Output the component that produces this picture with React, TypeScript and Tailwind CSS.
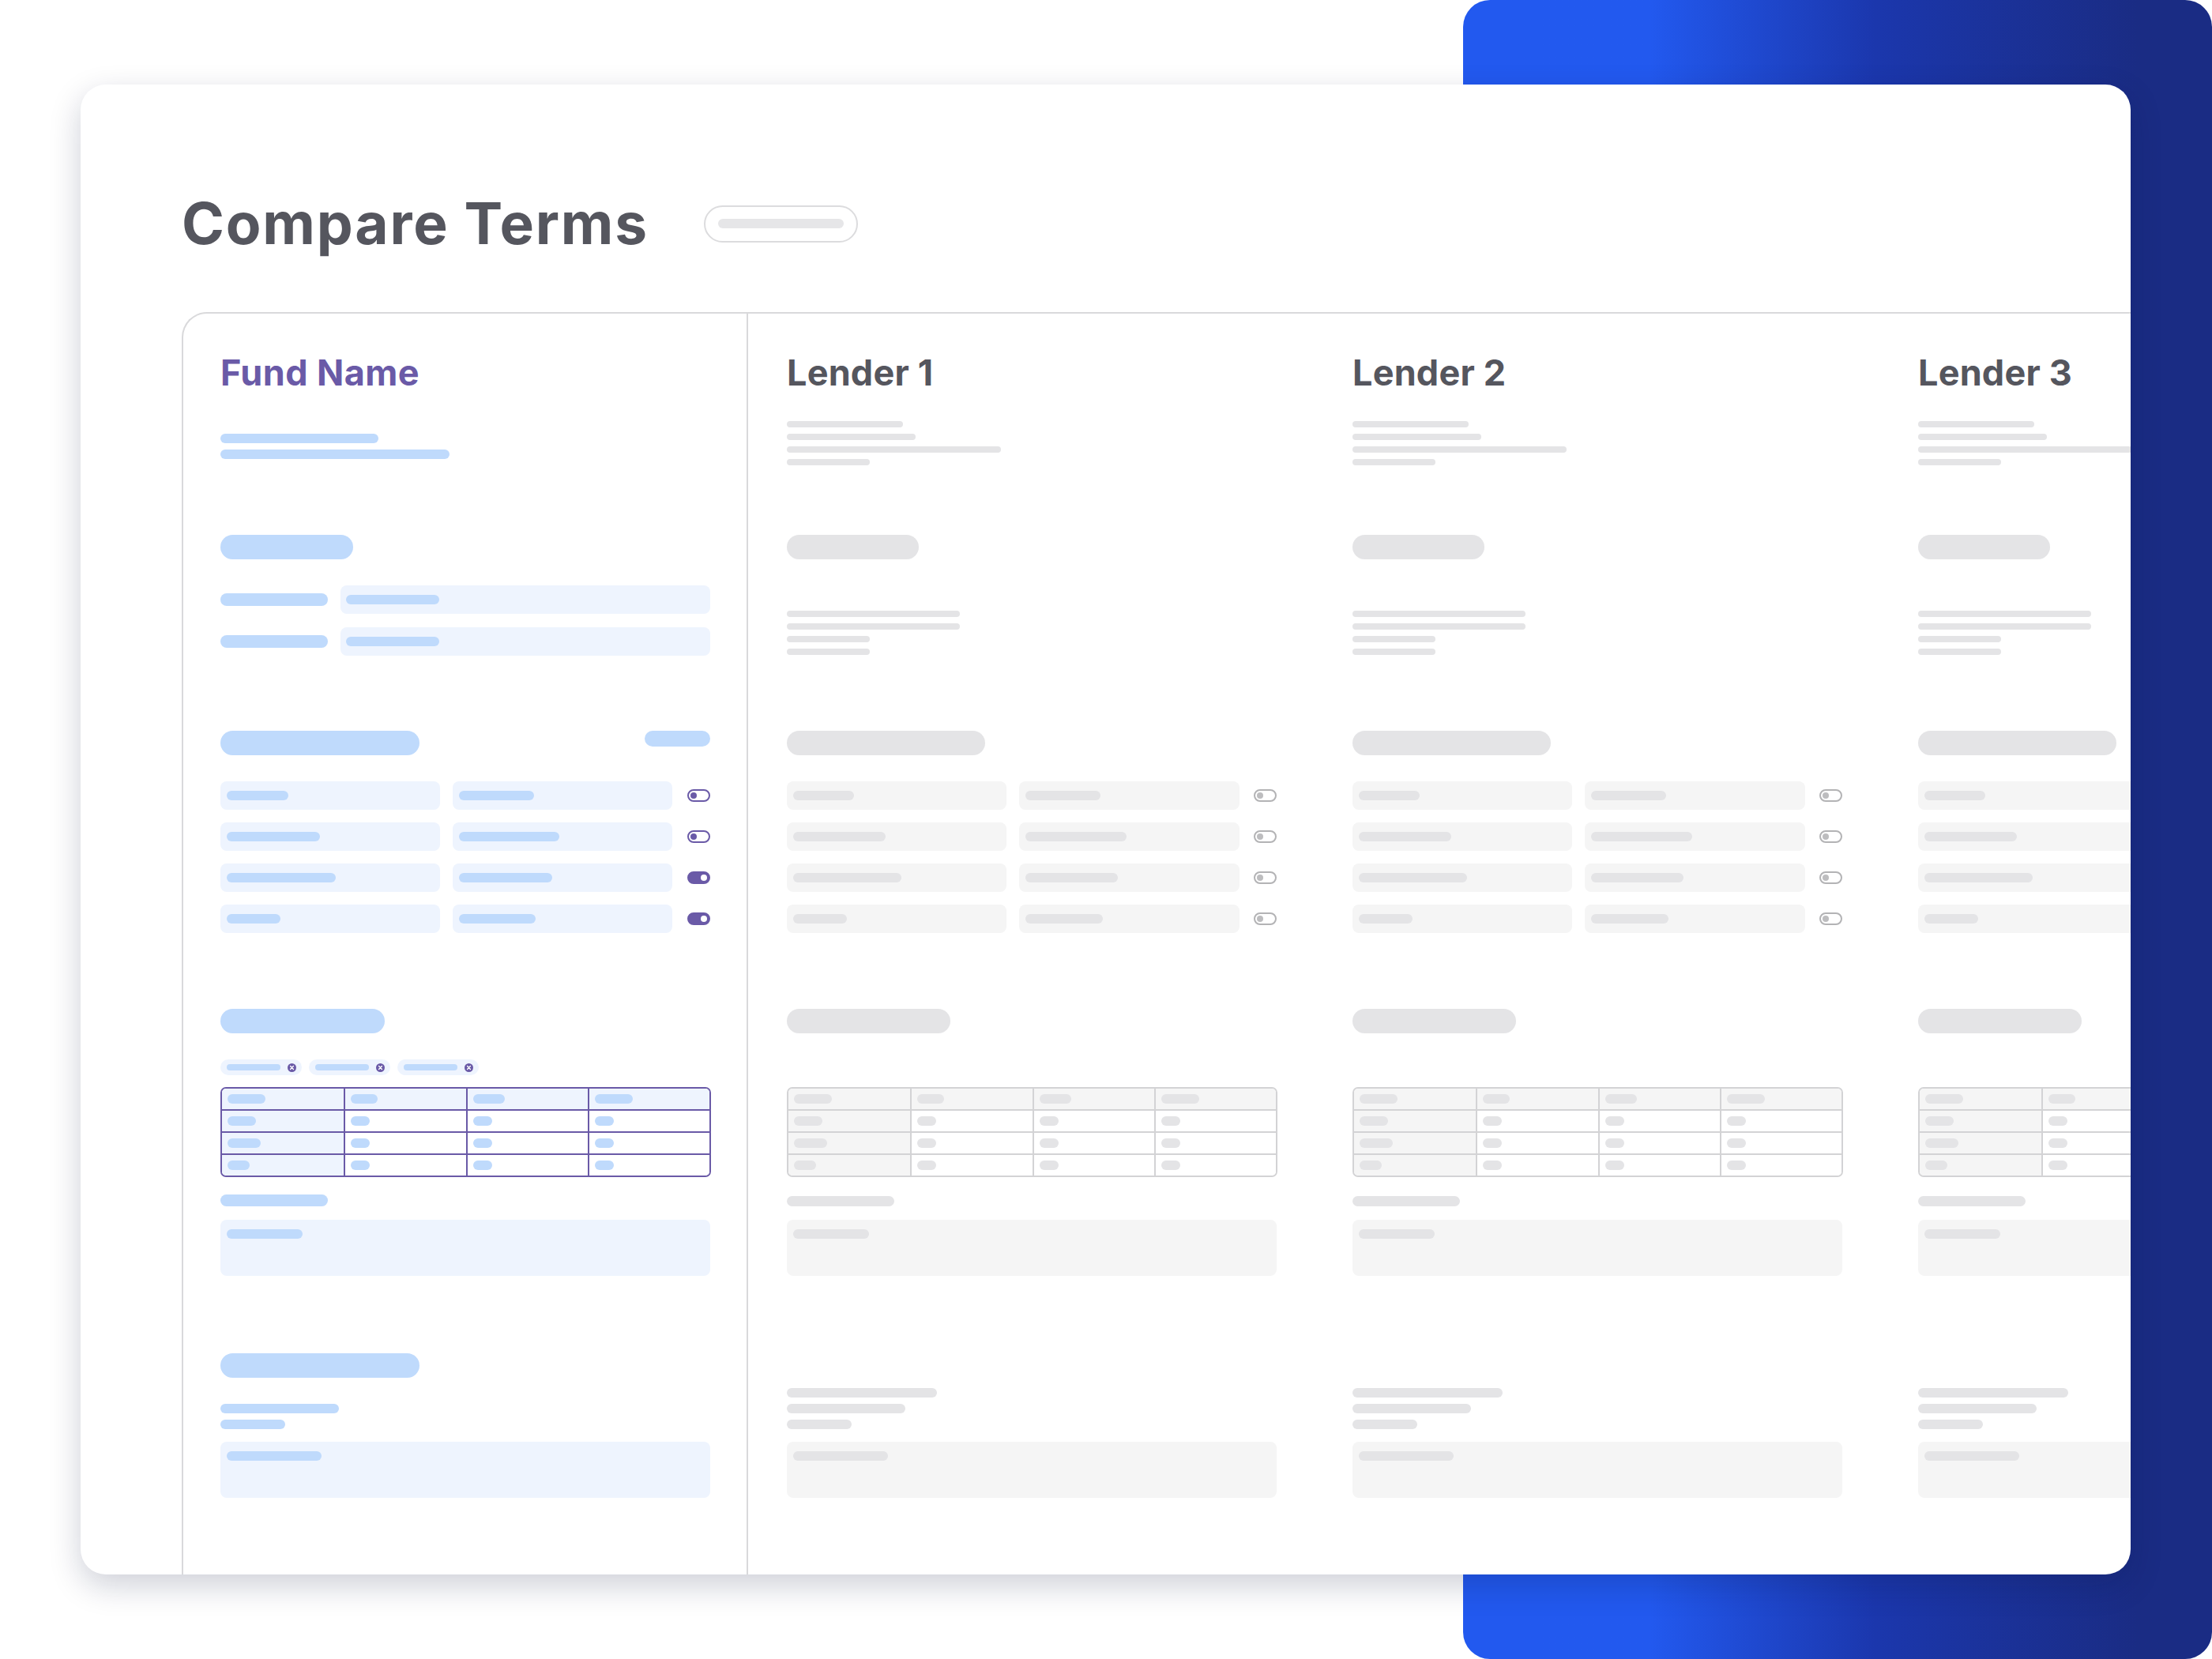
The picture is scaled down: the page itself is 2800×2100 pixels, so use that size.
import React from "react";

const FUND_ROWS = [
  { a: 78, b: 95, on: false },
  { a: 118, b: 127, on: false },
  { a: 138, b: 118, on: true },
  { a: 68, b: 97, on: true },
];

const LENDER_ROWS = [
  { a: 77, b: 95 },
  { a: 117, b: 128 },
  { a: 137, b: 117 },
  { a: 68, b: 98 },
];

const TABLE_HEAD = [48, 34, 40, 48];
const TABLE_FIRST = [36, 42, 28];

function Bar({ w, h = 12, color }: { w: number; h?: number; color: string }) {
  return <div className={`shrink-0 rounded-full ${color}`} style={{ width: w, height: h }} />;
}

function Toggle({ on, gray }: { on?: boolean; gray?: boolean }) {
  if (gray) {
    return (
      <div className="flex h-[16px] w-[29px] shrink-0 items-center rounded-full border-2 border-[#b3b3b5] px-[2px]">
        <div className="h-[8px] w-[8px] rounded-full bg-[#bdbdbf]" />
      </div>
    );
  }
  return on ? (
    <div className="flex h-[16px] w-[29px] shrink-0 items-center justify-end rounded-full border-2 border-[#6a5aa7] bg-[#6a5aa7] px-[2px]">
      <div className="h-[8px] w-[8px] rounded-full bg-white" />
    </div>
  ) : (
    <div className="flex h-[16px] w-[29px] shrink-0 items-center rounded-full border-2 border-[#6a5aa7] px-[2px]">
      <div className="h-[8px] w-[8px] rounded-full bg-[#6a5aa7]" />
    </div>
  );
}

function Chip() {
  return (
    <div className="flex h-[20px] w-[103px] items-center justify-between rounded-full bg-[#eef4fe] pl-[8px] pr-[7px]">
      <Bar w={68} h={8} color="bg-[#bfdafc]" />
      <svg width="11" height="11" viewBox="0 0 11 11">
        <circle cx="5.5" cy="5.5" r="5.5" fill="#6a5aa7" />
        <path d="M3.6 3.6 L7.4 7.4 M7.4 3.6 L3.6 7.4" stroke="#fff" strokeWidth="1.4" strokeLinecap="round" />
      </svg>
    </div>
  );
}

function MiniTable({ fund }: { fund?: boolean }) {
  const border = fund ? "border-[#6a5aa7]" : "border-[#d3d3d5]";
  const tint = fund ? "bg-[#eef4fe]" : "bg-[#f5f5f5]";
  const bar = fund ? "bg-[#bfdafc]" : "bg-[#e4e4e6]";
  return (
    <div className={`w-[621px] overflow-hidden rounded-[7px] border-2 ${border}`}>
      <div className={`grid h-[26px] grid-cols-4 ${tint}`}>
        {TABLE_HEAD.map((w, i) => (
          <div key={i} className={`flex items-center pl-[7px] ${i > 0 ? `border-l-2 ${border}` : ""}`}>
            <Bar w={w} color={bar} />
          </div>
        ))}
      </div>
      {TABLE_FIRST.map((fw, r) => (
        <div key={r} className={`grid h-[28px] grid-cols-4 border-t-2 ${border}`}>
          {[fw, 24, 24, 24].map((w, i) => (
            <div
              key={i}
              className={`flex items-center pl-[7px] ${i === 0 ? tint : `border-l-2 bg-white ${border}`}`}
            >
              <Bar w={w} color={bar} />
            </div>
          ))}
        </div>
      ))}
    </div>
  );
}

function FundColumn() {
  const blue = "bg-[#bfdafc]";
  return (
    <div className="flex w-[715px] shrink-0 flex-col border-r-2 border-[#d9d9db] pl-[47px] pr-[46px]">
      {/* header */}
      <div className="h-[280px] pt-[48px]">
        <h2 className="text-[45px] font-bold leading-[54px] tracking-[0.4px] text-[#6a5aa7]">Fund Name</h2>
        <div className="mt-[50px] flex flex-col gap-[8px]">
          <Bar w={200} color={blue} />
          <Bar w={290} color={blue} />
        </div>
      </div>

      {/* section 2 */}
      <div className="h-[248px]">
        <Bar w={168} h={31} color={blue} />
        <div className="mt-[33px] flex flex-col gap-[17px]">
          {[0, 1].map((i) => (
            <div key={i} className="flex items-center gap-[16px]">
              <Bar w={136} h={16} color={blue} />
              <div className="flex h-[36px] flex-1 items-center rounded-lg bg-[#eef4fe] pl-[7px]">
                <Bar w={118} color={blue} />
              </div>
            </div>
          ))}
        </div>
      </div>

      {/* section 3 */}
      <div className="h-[352px]">
        <div className="flex items-start justify-between">
          <Bar w={252} h={31} color={blue} />
          <Bar w={83} h={20} color={blue} />
        </div>
        <div className="mt-[33px] flex flex-col gap-[16px]">
          {FUND_ROWS.map((r, i) => (
            <div key={i} className="flex items-center">
              <div className="flex h-[36px] w-[278px] items-center rounded-lg bg-[#eef4fe] pl-[8px]">
                <Bar w={r.a} color={blue} />
              </div>
              <div className="ml-[16px] flex h-[36px] w-[278px] items-center rounded-lg bg-[#eef4fe] pl-[8px]">
                <Bar w={r.b} color={blue} />
              </div>
              <div className="ml-auto">
                <Toggle on={r.on} />
              </div>
            </div>
          ))}
        </div>
      </div>

      {/* section 4 */}
      <div className="h-[436px]">
        <Bar w={208} h={31} color={blue} />
        <div className="mt-[33px] flex gap-[9px]">
          <Chip />
          <Chip />
          <Chip />
        </div>
        <div className="mt-[15px]">
          <MiniTable fund />
        </div>
        <div className="mt-[22px]">
          <Bar w={136} h={15} color={blue} />
        </div>
        <div className="mt-[17px] h-[71px] rounded-lg bg-[#eef4fe] pl-[8px] pt-[12px]">
          <Bar w={96} color={blue} />
        </div>
      </div>

      {/* section 5 */}
      <div>
        <Bar w={252} h={31} color={blue} />
        <div className="mt-[33px] flex flex-col gap-[8px]">
          <Bar w={150} color={blue} />
          <Bar w={82} color={blue} />
        </div>
        <div className="mt-[16px] h-[71px] rounded-lg bg-[#eef4fe] pl-[8px] pt-[12px]">
          <Bar w={120} color={blue} />
        </div>
      </div>
    </div>
  );
}

function LenderColumn({ name }: { name: string }) {
  const gray = "bg-[#e4e4e6]";
  return (
    <div className="flex w-[716px] shrink-0 flex-col pl-[49px] pr-[47px]">
      {/* header */}
      <div className="h-[280px] pt-[48px]">
        <h2 className="whitespace-nowrap text-[45px] font-bold leading-[54px] tracking-[0.2px] text-[#55565e]">{name}</h2>
        <div className="mt-[34px] flex flex-col gap-[8px]">
          <Bar w={147} h={8} color={gray} />
          <Bar w={163} h={8} color={gray} />
          <Bar w={271} h={8} color={gray} />
          <Bar w={105} h={8} color={gray} />
        </div>
      </div>

      {/* section 2 */}
      <div className="h-[248px]">
        <Bar w={167} h={31} color={gray} />
        <div className="mt-[65px] flex flex-col gap-[8px]">
          <Bar w={219} h={8} color={gray} />
          <Bar w={219} h={8} color={gray} />
          <Bar w={105} h={8} color={gray} />
          <Bar w={105} h={8} color={gray} />
        </div>
      </div>

      {/* section 3 */}
      <div className="h-[352px]">
        <Bar w={251} h={31} color={gray} />
        <div className="mt-[33px] flex flex-col gap-[16px]">
          {LENDER_ROWS.map((r, i) => (
            <div key={i} className="flex items-center">
              <div className="flex h-[36px] w-[278px] shrink-0 items-center rounded-lg bg-[#f5f5f5] pl-[8px]">
                <Bar w={r.a} color={gray} />
              </div>
              <div className="ml-[16px] flex h-[36px] w-[279px] shrink-0 items-center rounded-lg bg-[#f5f5f5] pl-[8px]">
                <Bar w={r.b} color={gray} />
              </div>
              <div className="ml-auto">
                <Toggle gray />
              </div>
            </div>
          ))}
        </div>
      </div>

      {/* section 4 */}
      <div className="h-[436px]">
        <Bar w={207} h={31} color={gray} />
        <div className="mt-[68px]">
          <MiniTable />
        </div>
        <div className="mt-[24px]">
          <Bar w={136} h={13} color={gray} />
        </div>
        <div className="mt-[17px] h-[71px] rounded-lg bg-[#f5f5f5] pl-[8px] pt-[12px]">
          <Bar w={96} color={gray} />
        </div>
      </div>

      {/* section 5 */}
      <div>
        <div className="mt-[44px] flex flex-col gap-[8px]">
          <Bar w={190} color={gray} />
          <Bar w={150} color={gray} />
          <Bar w={82} color={gray} />
        </div>
        <div className="mt-[16px] h-[71px] rounded-lg bg-[#f5f5f5] pl-[8px] pt-[12px]">
          <Bar w={120} color={gray} />
        </div>
      </div>
    </div>
  );
}

export default function App() {
  return (
    <div className="relative h-[2100px] w-[2800px] overflow-hidden bg-white pt-[107px] font-['Inter',sans-serif]">
      {/* blue backdrop */}
      <div className="absolute left-[1852px] top-0 h-[2100px] w-[948px] rounded-[34px] bg-linear-to-r from-[#2259ef] from-25% via-[#1b37ad] via-55% to-[#1a2c84] to-90%" />

      {/* card */}
      <div className="relative ml-[102px] flex h-[1886px] w-[2595px] flex-col overflow-hidden rounded-[32px] bg-white shadow-[0_14px_40px_rgba(10,20,60,0.2)]">
        <div className="flex items-center gap-[70px] pl-[128px] pt-[132px]">
          <h1 className="text-[73px] font-bold leading-[88px] tracking-[1.8px] text-[#55565e]">Compare Terms</h1>
          <div className="flex h-[47px] w-[195px] items-center justify-center rounded-full border-2 border-[#dcdcde]">
            <div className="h-[12px] w-[159px] rounded-full bg-[#e6e6e8]" />
          </div>
        </div>

        <div className="ml-[128px] mt-[68px] flex flex-1 rounded-tl-[32px] border-l-2 border-t-2 border-[#d9d9db]">
          <FundColumn />
          <LenderColumn name="Lender 1" />
          <LenderColumn name="Lender 2" />
          <LenderColumn name="Lender 3" />
        </div>
      </div>
    </div>
  );
}
